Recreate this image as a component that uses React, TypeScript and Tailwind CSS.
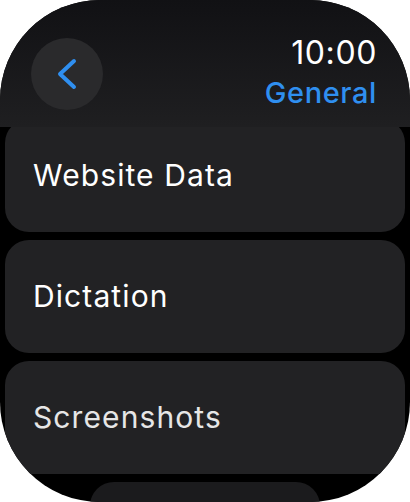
const items = ["Website Data", "Dictation", "Screenshots"];

function BackButton() {
  return (
    <button className="flex h-[72px] w-[72px] items-center justify-center rounded-full bg-[#2a2a2c]" aria-label="Back">
      <svg width="24" height="34" viewBox="0 0 24 34" fill="none">
        <path d="M19 4 L5 17 L19 30" stroke="#2f8ff0" strokeWidth="4" strokeLinecap="round" strokeLinejoin="round" />
      </svg>
    </button>
  );
}

export default function App() {
  return (
    <div className="h-[502px] w-[410px] bg-white font-['Inter',sans-serif]">
      <div className="relative h-full w-full overflow-hidden rounded-[100px] bg-black">
        <header className="absolute inset-x-0 top-0 z-10 flex h-[127px] items-start justify-between bg-gradient-to-b from-[#111114] to-[#1f1f21] pl-[31px] pr-[33px] pt-[38px]">
          <BackButton />
          <div className="flex flex-col items-end">
            <span className="text-[32px] leading-[30px] tracking-[0.6px] text-white">10:00</span>
            <span className="mt-[10px] text-[29px] font-medium leading-[30px] tracking-[0.6px] text-[#2f8ff0]">General</span>
          </div>
        </header>

        <ul className="flex flex-col gap-[8px] px-[5px] pt-[119px]">
          {items.map((label, i) => (
            <li
              key={label}
              className={`flex h-[113px] items-center rounded-[24px] bg-[#222224] pl-[28px] text-[30px] tracking-[1.1px] ${
                i === 2 ? "text-[#e6e6e6]" : "text-white"
              }`}
            >
              {label}
            </li>
          ))}
          <li className="mx-[85px] h-[60px] rounded-[24px] bg-[#1b1b1d]" />
        </ul>
      </div>
    </div>
  );
}
